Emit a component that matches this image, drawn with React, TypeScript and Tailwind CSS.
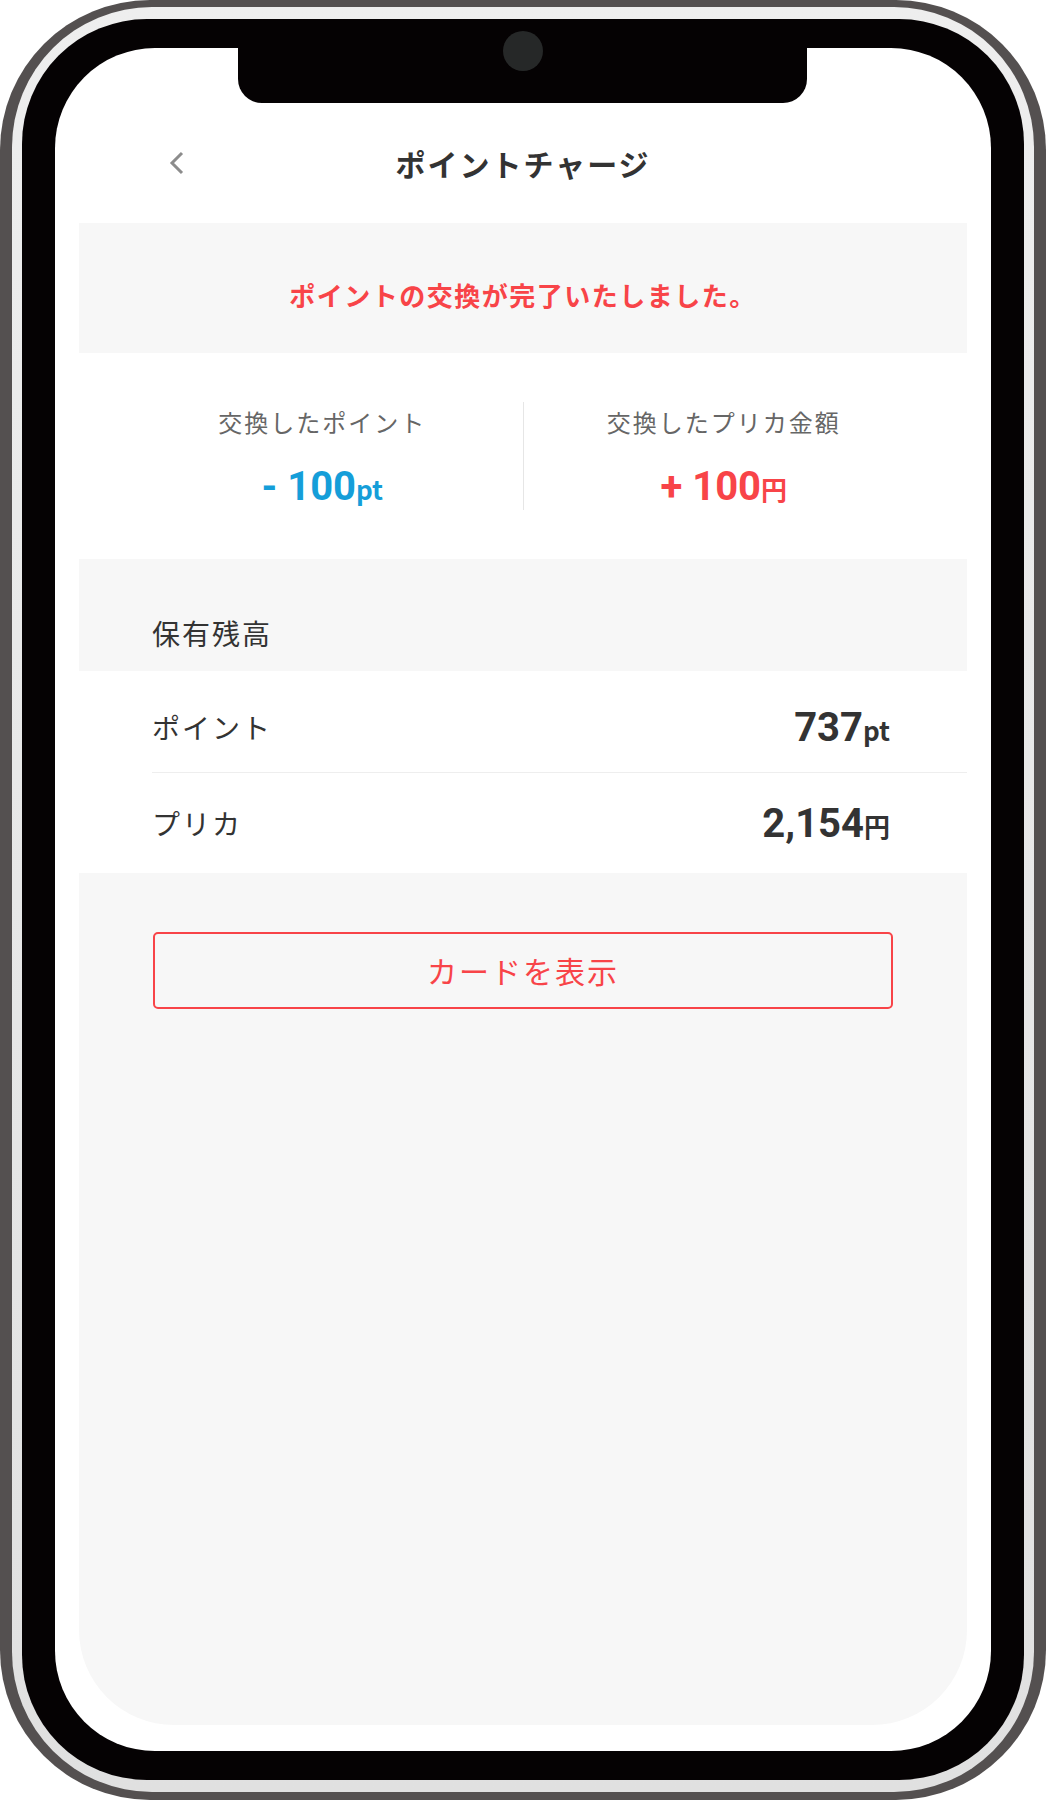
import { ReactNode } from "react";

const JP = "font-['Noto_Sans_CJK_JP','Noto_Sans',sans-serif]";
const NUM = "font-['Roboto','Noto_Sans_CJK_JP',sans-serif]";

function Amount({ value, unit, className }: { value: string; unit: string; className: string }) {
  return (
    <span className={`${NUM} font-bold leading-[40px] ${className}`}>
      <span className="text-[40px]">{value}</span>
      <span className={`${JP} text-[26px] font-bold`}>{unit}</span>
    </span>
  );
}

function BalanceRow({ label, children, last }: { label: string; children: ReactNode; last?: boolean }) {
  return (
    <div
      className={`flex items-center justify-between pr-[77px] ${
        last ? "h-[100px]" : "h-[102px] border-b border-[#eeeeee] pt-[10px]"
      }`}
    >
      <span className="text-[28px] leading-[40px] tracking-[2px] text-[#333333]">{label}</span>
      <div className="mt-[10px]">{children}</div>
    </div>
  );
}

export default function App() {
  return (
    <div className={`${JP} h-[1800px] w-[1046px] rounded-[150px] bg-[#545050] px-[12px] pt-[7px] pb-[8px]`}>
      <div className="h-full rounded-[140px] bg-gradient-to-b from-[#eeeeee] to-[#e0e0e0] px-[10px] py-[12px]">
        <div className="relative h-full rounded-[125px] bg-[#050203] px-[33px] py-[29px]">
          {/* notch */}
          <div className="absolute left-[216px] top-0 z-10 flex h-[84px] w-[569px] justify-center rounded-b-[24px] bg-[#050203] pt-[12px]">
            <div className="h-[40px] w-[40px] rounded-full bg-[#262828]" />
          </div>

          <div className="flex h-full flex-col overflow-hidden rounded-[100px] bg-white">
            {/* header */}
            <div className="mt-[87px] grid h-[56px] grid-cols-[1fr_auto_1fr] items-center px-[24px]">
              <div className="flex">
                <svg className="ml-[90px]" width="15" height="24" viewBox="0 0 15 24" fill="none">
                  <polyline points="13,2 3,12 13,22" stroke="#8c8c8c" strokeWidth="3" />
                </svg>
              </div>
              <h1 className="text-[30px] font-bold tracking-[2px] text-[#333333]">ポイントチャージ</h1>
              <div />
            </div>

            {/* completion banner */}
            <div className="mx-[24px] mt-[32px] flex h-[130px] items-center justify-center bg-[#f7f7f7] pt-[12px]">
              <p className="text-[26px] font-bold tracking-[1.5px] text-[#f84448]">
                ポイントの交換が完了いたしました。
              </p>
            </div>

            {/* exchanged amounts */}
            <div className="mx-[24px] flex items-start px-[43px] pb-[49px] pt-[49px]">
              <div className="flex flex-1 flex-col items-center">
                <span className="text-[24px] leading-[40px] tracking-[2px] text-[#666666]">交換したポイント</span>
                <div className="mt-[25px] h-[40px]">
                  <Amount value="- 100" unit="pt" className="text-[#159ed9]" />
                </div>
              </div>
              <div className="h-[108px] w-px bg-[#e6e6e6]" />
              <div className="flex flex-1 flex-col items-center">
                <span className="text-[24px] leading-[40px] tracking-[2px] text-[#666666]">交換したプリカ金額</span>
                <div className="mt-[25px] h-[40px]">
                  <Amount value="+ 100" unit="円" className="text-[#f84448]" />
                </div>
              </div>
            </div>

            {/* balance */}
            <div className="mx-[24px] bg-[#f7f7f7] pb-[18px] pl-[73px] pt-[54px]">
              <span className="text-[28px] leading-[40px] tracking-[2px] text-[#333333]">保有残高</span>
            </div>
            <div className="ml-[97px] mr-[24px]">
              <BalanceRow label="ポイント">
                <Amount value="737" unit="pt" className="text-[#333333]" />
              </BalanceRow>
              <BalanceRow label="プリカ" last>
                <Amount value="2,154" unit="円" className="text-[#333333]" />
              </BalanceRow>
            </div>

            {/* actions */}
            <div className="mx-[24px] mb-[26px] flex-1 rounded-b-[95px] bg-[#f7f7f7] px-[74px] pt-[59px]">
              <button className="flex h-[77px] w-full items-center justify-center rounded-[5px] border-2 border-[#f84448] text-[30px] tracking-[2px] text-[#f84448]">
                カードを表示
              </button>
            </div>
          </div>
        </div>
      </div>
    </div>
  );
}
